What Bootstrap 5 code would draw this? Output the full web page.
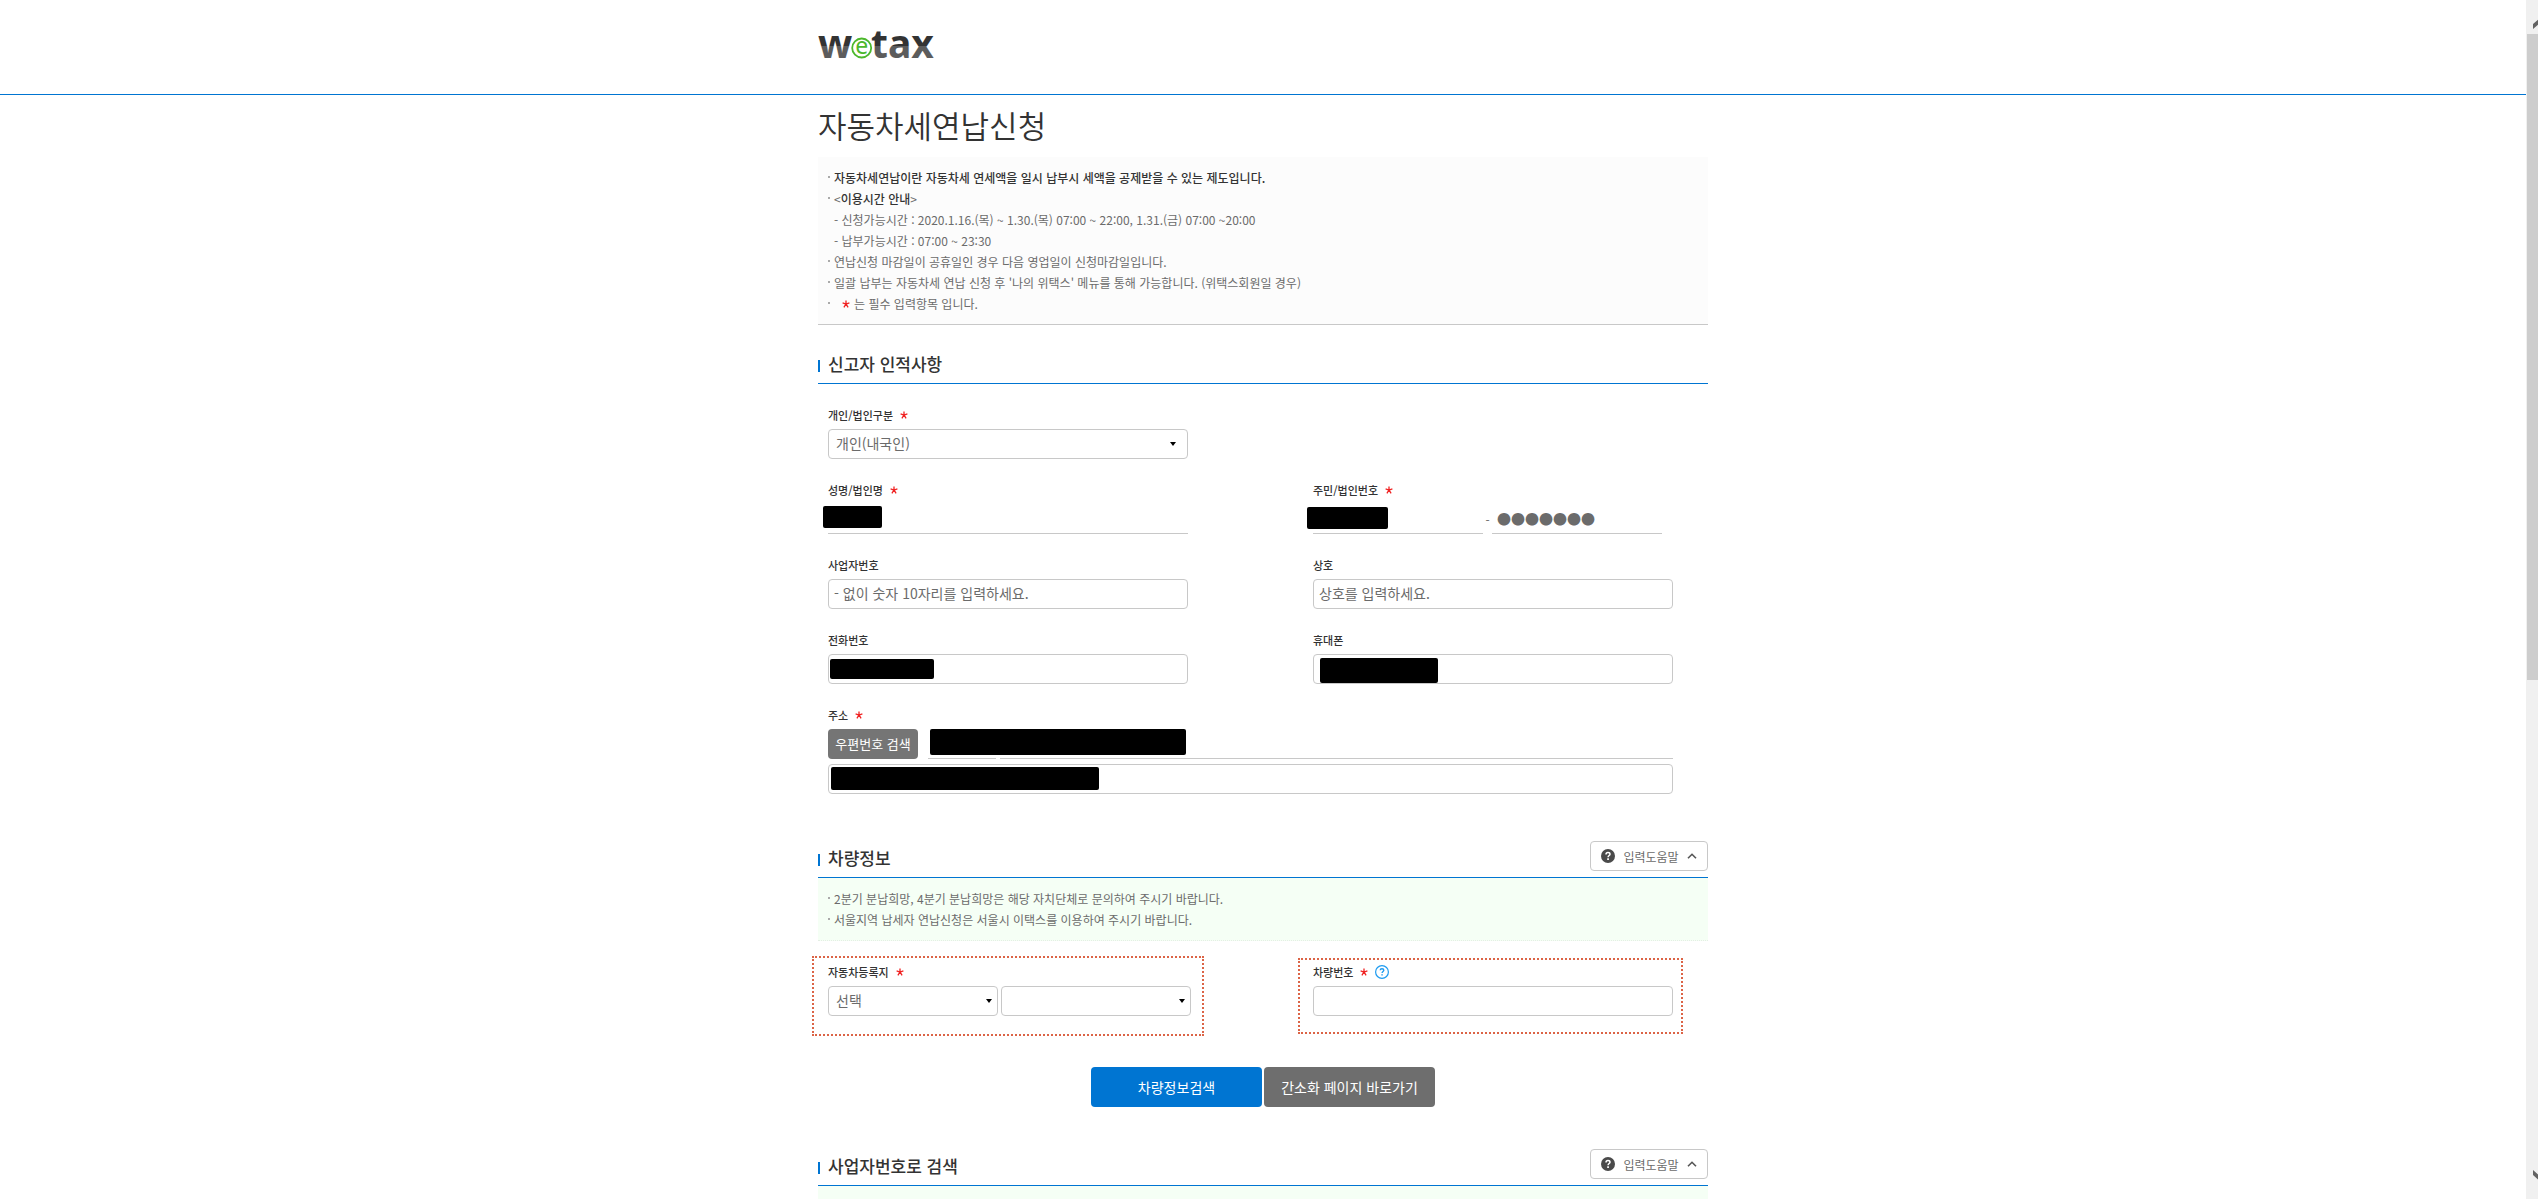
<!DOCTYPE html>
<html lang="ko">
<head>
<meta charset="utf-8">
<meta name="viewport" content="width=device-width, initial-scale=1">
<title>자동차세연납신청 - wetax</title>
<link href="https://cdn.jsdelivr.net/npm/bootstrap@5.3.0/dist/css/bootstrap.min.css" rel="stylesheet">
<style>
:root{--wt-blue:#0075d2;--wt-line:#c8c8c8;--wt-ink:#333;--wt-text:#6b6b6b}
body{font-family:"Noto Sans CJK KR","Noto Sans",sans-serif;font-size:12px;line-height:21px;color:var(--wt-text)}
.wt-inner{max-width:890px}
.wt-header{border-bottom:1px solid var(--wt-blue);padding:12px 0 22px}
.wt-header a{height:60px}
.wt-title{font-size:31px;line-height:40px;font-weight:350;color:var(--wt-ink);margin:10px 0 12px}
.wt-notice{padding:10px;background:#fcfcfc;border-bottom:1px solid var(--wt-line)}
.wt-notice li{padding-left:6px;position:relative}
.wt-notice li::before{content:"";position:absolute;left:0;top:9px;width:2px;height:2px;background:#aaa}
.wt-notice li.wt-sub::before{display:none}
.wt-notice strong{font-weight:500;color:var(--wt-ink)}
.wt-notice.wt-green{background:#f5fff5;border-bottom:1px dotted #e4efe4}
.wt-sect{height:38px;border-bottom:1px solid var(--wt-blue);padding-bottom:6px}
.wt-sect h2{font-size:17px;line-height:26px;font-weight:500;color:var(--wt-ink);padding-left:10px;position:relative;margin:0}
.wt-sect h2::before{content:"";position:absolute;left:0;top:9px;width:2px;height:12px;background:var(--wt-blue)}
.wt-form{padding:21px 35px 0 10px}
.wt-gap-s{margin-top:21px}
.wt-gap-m{margin-top:41px}
.wt-gap-l{margin-top:46px}
.wt-actions{margin-top:51px;gap:2px}
.wt-line{margin-bottom:21px}
.wt-field{width:360px;position:relative}
.wt-label{font-size:11px;line-height:20px;font-weight:500;color:var(--wt-ink)}
.wt-cap{height:20px;margin-bottom:4px;gap:7px}
.wt-form .form-control,.wt-form .form-select{height:30px;border:1px solid var(--wt-line);border-radius:4px;font-size:14px;line-height:20px;padding:3px 5px 5px;color:var(--wt-text);font-weight:400;background-color:#fff}
.wt-form .form-control::placeholder{color:var(--wt-text);opacity:1}
.wt-form .form-select{padding-left:7px;background-image:url("data:image/svg+xml,%3Csvg xmlns='http://www.w3.org/2000/svg' viewBox='0 0 6 4'%3E%3Cpath d='M0 0h6L3 4z' fill='%23000'/%3E%3C/svg%3E");background-size:6px 4px;background-position:right 11px center}
.wt-form .wt-tight{background-position:right 5px center}
.wt-form .wt-under{border-width:0 0 1px;border-radius:0}
.wt-form .wt-w170{width:170px}
.wt-form .wt-w190{width:190px}
.wt-form .wt-w68{width:68px}
.wt-pair{gap:3px}
.wt-dash{width:9px}
.wt-detail{margin-top:5px}
.wt-btn{border:0;border-radius:4px;color:#fff;background:#757575;line-height:20px}
.wt-post{font-size:13px;width:90px;height:30px;margin-right:10px}
.wt-big{font-size:14px;width:171px;height:40px}
.wt-primary{background:var(--wt-blue)}
.wt-gray{background:#6e6e6e}
.wt-help{width:118px;height:30px;border:1px solid var(--wt-line);border-radius:4px;background:#fff;color:var(--wt-text);padding:0 10px}
.wt-mask{position:absolute;background:#000;border-radius:2px}
.wt-name{left:-5px;top:26px;width:59px;height:22px}
.wt-rrn{left:-6px;top:27px;width:81px;height:22px}
.wt-tel{left:2px;top:29px;width:104px;height:20px}
.wt-cell{left:7px;top:28px;width:118px;height:25px}
.wt-addr{left:102px;top:0;width:256px;height:26px}
.wt-addr2{left:3px;top:3px;width:268px;height:23px}
.wt-focus::after{content:"";position:absolute;border:2px dotted #dc6446;pointer-events:none;inset:-6px -16px -20px -16px}
.wt-focus-b::after{inset:-4px -10px -18px -15px}
.wt-more{height:84px}
.wt-scroll{width:12px;background:#f0f0f0}
.wt-thumb{margin-left:1px;height:646px;background:#cdcdcd}
.wt-arrow{height:34px}
</style>
<script src="https://cdn.jsdelivr.net/npm/bootstrap@5.3.0/dist/js/bootstrap.bundle.min.js"></script>
</head>
<body>
<svg width="0" height="0" class="position-absolute" aria-hidden="true">
  <symbol id="star" viewBox="0 0 8 8"><path d="M4 .5V4M.6 2.900 4 4l3.400-1.100M1.900 7.300 4 4l2.100 3.300" fill="none" stroke="#f02222" stroke-width="1.300"/></symbol>
  <symbol id="help" viewBox="0 0 14 14"><circle cx="7" cy="7" r="7" fill="#4a4a4a"/><path d="M5 5.400C5 4.200 5.900 3.500 7 3.500s2 .7 2 1.700C9 6.500 7.100 6.600 7.100 8.200" fill="none" stroke="#fff" stroke-width="1.500"/><path d="M6.200 9.300h1.700v1.600H6.200z" fill="#fff"/></symbol>
  <symbol id="up" viewBox="0 0 10 6"><path d="M1 5.300 5 1.300l4 4" fill="none" stroke="#555" stroke-width="1.600"/></symbol>
</svg>
<div class="d-flex vh-100 overflow-hidden">
  <div class="flex-grow-1 overflow-hidden">
    <header class="wt-header">
      <div class="wt-inner mx-auto">
        <a href="#" class="d-block" aria-label="wetax">
          <svg class="d-block" width="130" height="60" viewBox="0 0 130 60" font-family="'Noto Sans','Open Sans',sans-serif">
            <defs><linearGradient id="tone" gradientUnits="userSpaceOnUse" x1="0" y1="0" x2="0" y2="60"><stop offset=".567" stop-color="#333"/><stop offset=".567" stop-color="#5c5c5c"/></linearGradient></defs>
            <text x="0" y="46" font-size="40" font-weight="700" fill="url(#tone)">w</text>
            <circle cx="43.700" cy="36" r="9.500" fill="#fff" stroke="#4cb82c" stroke-width="1.800"/>
            <text x="43.700" y="42" font-size="23" text-anchor="middle" fill="#4cb82c">e</text>
            <text x="53" y="46" font-size="39" font-weight="700" fill="url(#tone)">tax</text>
          </svg>
        </a>
      </div>
    </header>
    <main class="wt-inner mx-auto">
      <h1 class="wt-title">자동차세연납신청</h1>
      <ul class="wt-notice list-unstyled mb-0">
        <li><strong>자동차세연납이란 자동차세 연세액을 일시 납부시 세액을 공제받을 수 있는 제도입니다.</strong></li>
        <li>&lt;<strong>이용시간 안내</strong>&gt;</li>
        <li class="wt-sub">- 신청가능시간 : 2020.1.16.(목) ~ 1.30.(목) 07:00 ~ 22:00, 1.31.(금) 07:00 ~20:00</li>
        <li class="wt-sub">- 납부가능시간 : 07:00 ~ 23:30</li>
        <li>연납신청 마감일이 공휴일인 경우 다음 영업일이 신청마감일입니다.</li>
        <li>일괄 납부는 자동차세 연납 신청 후 '나의 위택스' 메뉴를 통해 가능합니다. (위택스회원일 경우)</li>
        <li class="d-flex align-items-center"><svg class="ms-2 me-1" width="8" height="8"><use href="#star"/></svg>는 필수 입력항목 입니다.</li>
      </ul>

      <section class="wt-gap-s">
        <div class="wt-sect d-flex align-items-end justify-content-between"><h2>신고자 인적사항</h2></div>
        <form class="wt-form">
          <div class="wt-line">
            <div class="wt-field">
              <div class="wt-cap d-flex align-items-center"><label class="wt-label" for="kind">개인/법인구분</label><svg width="8" height="8"><use href="#star"/></svg></div>
              <select class="form-select" id="kind"><option>개인(내국인)</option></select>
            </div>
          </div>
          <div class="wt-line d-flex flex-wrap justify-content-between">
            <div class="wt-field">
              <div class="wt-cap d-flex align-items-center"><label class="wt-label" for="name">성명/법인명</label><svg width="8" height="8"><use href="#star"/></svg></div>
              <input class="form-control wt-under" id="name" readonly>
              <span class="wt-mask wt-name"></span>
            </div>
            <div class="wt-field">
              <div class="wt-cap d-flex align-items-center"><label class="wt-label" for="rrn">주민/법인번호</label><svg width="8" height="8"><use href="#star"/></svg></div>
              <div class="d-flex align-items-center">
                <input class="form-control wt-under wt-w170" id="rrn" readonly>
                <span class="wt-dash text-center">-</span>
                <input class="form-control wt-under wt-w170" aria-label="주민/법인번호 뒷자리" value="●●●●●●●" readonly>
              </div>
              <span class="wt-mask wt-rrn"></span>
            </div>
          </div>
          <div class="wt-line d-flex flex-wrap justify-content-between">
            <div class="wt-field">
              <div class="wt-cap d-flex align-items-center"><label class="wt-label" for="biz">사업자번호</label></div>
              <input class="form-control" id="biz" placeholder="- 없이 숫자 10자리를 입력하세요.">
            </div>
            <div class="wt-field">
              <div class="wt-cap d-flex align-items-center"><label class="wt-label" for="firm">상호</label></div>
              <input class="form-control" id="firm" placeholder="상호를 입력하세요.">
            </div>
          </div>
          <div class="wt-line d-flex flex-wrap justify-content-between">
            <div class="wt-field">
              <div class="wt-cap d-flex align-items-center"><label class="wt-label" for="tel">전화번호</label></div>
              <input class="form-control" id="tel">
              <span class="wt-mask wt-tel"></span>
            </div>
            <div class="wt-field">
              <div class="wt-cap d-flex align-items-center"><label class="wt-label" for="cell">휴대폰</label></div>
              <input class="form-control" id="cell">
              <span class="wt-mask wt-cell"></span>
            </div>
          </div>
          <div class="wt-cap d-flex align-items-center"><label class="wt-label" for="addr">주소</label><svg width="8" height="8"><use href="#star"/></svg></div>
          <div class="d-flex position-relative">
            <button type="button" class="wt-btn wt-post p-0 flex-shrink-0">우편번호 검색</button>
            <input class="form-control wt-under wt-w68 flex-shrink-0 me-1" aria-label="우편번호" readonly>
            <input class="form-control wt-under" id="addr" readonly>
            <span class="wt-mask wt-addr"></span>
          </div>
          <div class="wt-detail position-relative">
            <input class="form-control" aria-label="상세주소">
            <span class="wt-mask wt-addr2"></span>
          </div>
        </form>
      </section>

      <section class="wt-gap-l">
        <div class="wt-sect d-flex align-items-end justify-content-between"><h2>차량정보</h2>
          <button type="button" class="wt-help d-flex align-items-center justify-content-between"><svg width="14" height="14"><use href="#help"/></svg><span>입력도움말</span><svg width="10" height="6"><use href="#up"/></svg></button>
        </div>
        <ul class="wt-notice wt-green list-unstyled mb-0">
          <li>2분기 분납희망, 4분기 분납희망은 해당 자치단체로 문의하여 주시기 바랍니다.</li>
          <li>서울지역 납세자 연납신청은 서울시 이택스를 이용하여 주시기 바랍니다.</li>
        </ul>
        <form class="wt-form d-flex flex-wrap justify-content-between">
          <div class="wt-field wt-focus">
            <div class="wt-cap d-flex align-items-center"><label class="wt-label" for="region">자동차등록지</label><svg width="8" height="8"><use href="#star"/></svg></div>
            <div class="d-flex wt-pair">
              <select class="form-select wt-tight wt-w170 flex-shrink-0" id="region"><option>선택</option></select>
              <select class="form-select wt-tight wt-w190 flex-shrink-0" aria-label="시군구"><option></option></select>
            </div>
          </div>
          <div class="wt-field wt-focus wt-focus-b">
            <div class="wt-cap d-flex align-items-center"><label class="wt-label" for="plate">차량번호</label><svg width="8" height="8"><use href="#star"/></svg>
              <a href="#" class="d-flex" aria-label="차량번호 도움말"><svg width="14" height="14" viewBox="0 0 14 14"><circle cx="7" cy="7" r="6.400" fill="#fff" stroke="#1e9bf0" stroke-width="1.200"/><path d="M5.200 5.300c0-1 .8-1.600 1.800-1.600s1.800.6 1.800 1.500c0 1.200-1.700 1.300-1.700 2.900" fill="none" stroke="#1e9bf0" stroke-width="1.400"/><path d="M6.300 9.200h1.500v1.400H6.300z" fill="#1e9bf0"/></svg></a>
            </div>
            <input class="form-control" id="plate">
          </div>
        </form>
        <div class="wt-actions d-flex justify-content-center">
          <button type="button" class="wt-btn wt-big wt-primary">차량정보검색</button>
          <button type="button" class="wt-btn wt-big wt-gray">간소화 페이지 바로가기</button>
        </div>
      </section>

      <section class="wt-gap-m">
        <div class="wt-sect d-flex align-items-end justify-content-between"><h2>사업자번호로 검색</h2>
          <button type="button" class="wt-help d-flex align-items-center justify-content-between"><svg width="14" height="14"><use href="#help"/></svg><span>입력도움말</span><svg width="10" height="6"><use href="#up"/></svg></button>
        </div>
        <div class="wt-notice wt-green wt-more"></div>
      </section>
    </main>
  </div>
  <div class="wt-scroll flex-shrink-0 overflow-hidden d-flex flex-column" aria-hidden="true">
    <svg class="wt-arrow flex-shrink-0" width="24" viewBox="0 0 24 34"><path d="M7 29v-5l8-7 8 7v5l-8-7z" fill="#636363"/></svg>
    <div class="wt-thumb flex-shrink-0"></div>
    <svg class="wt-arrow flex-shrink-0 mt-auto" width="24" viewBox="0 0 24 34"><path d="M7 5v5l8 7 8-7V5l-8 7z" fill="#636363"/></svg>
  </div>
</div>
</body>
</html>
